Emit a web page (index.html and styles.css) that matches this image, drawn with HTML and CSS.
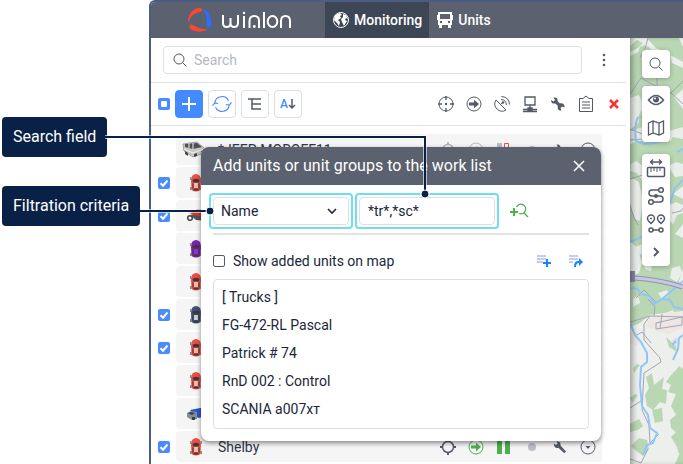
FILE: index.html
```html
<!DOCTYPE html>
<html lang="en">
<head>
<meta charset="utf-8">
<title>Wialon</title>
<link rel="stylesheet" href="styles.css">
</head>
<body>
<svg class="defs" aria-hidden="true">
  <symbol id="search" viewBox="0 0 16 16"><circle cx="7" cy="7" r="5"/><path d="M10.700 10.700L14.500 14.500"/></symbol>
  <symbol id="check" viewBox="0 0 12 12"><path d="M2.500 6.200L5 8.700 9.500 3.500"/></symbol>
  <symbol id="target" viewBox="0 0 18 18"><circle cx="9" cy="9" r="7"/><path stroke-width="1.400" d="M9 1v4M9 13v4M1 9h4M13 9h4"/><circle class="solid" cx="9" cy="9" r="1.200"/></symbol>
  <symbol id="crosshair" viewBox="0 0 18 18"><circle cx="9" cy="9" r="5.500" stroke-width="1.500"/><path stroke-width="2" d="M9 1v3M9 14v3M1 9h3M14 9h3"/></symbol>
  <symbol id="arrow" viewBox="0 0 18 18"><circle cx="9" cy="9" r="7"/><path class="solid" d="M4 7.500h5V4.800L14 9l-5 4.200v-2.700H4z"/></symbol>
  <symbol id="wrench" viewBox="0 0 18 18"><path class="solid" d="M3 5.500L5 7l1.700-1.500L5.500 3.500c3-.5 4.500 1.500 4 4l5.500 6-1.700 1.700-6-5.500C5 10.500 2.500 9 3 5.500z"/></symbol>
  <symbol id="wrench-wide" viewBox="0 0 18 18"><path class="solid" d="M2 5l2.500 1.500L6 5 4.500 2.500C8 2 9 4 8.500 6L11 8.500c2.500-1 5 .8 4.500 4L13 11.500 11.500 13l1 2.500C9.500 16 8 13.500 9 11L6.300 8.500C4 9 2 8 2 5z"/></symbol>
  <symbol id="down" viewBox="0 0 18 18"><circle cx="9" cy="9" r="7"/><path class="solid" d="M6.500 8h5L9 11z"/></symbol>
  <symbol id="car" viewBox="0 0 12 20"><path class="paint" d="M2 3Q6-1 10 3L11 8 10.500 17Q6 20 1.500 17L1 8z"/><path fill="#44383c" d="M2.500 7Q6 4.500 9.500 7L8.700 9.500H3.300zM2.500 10l1 1v4l-1 1zM9.500 10l-1 1v4l1 1zM3 16.500q3-2 6 0l-1 1H4z"/><path class="roof" d="M4 10h4v5H4z"/><path stroke="#333" stroke-width=".8" d="M.8 4v3M11.200 4v3M.8 14v3M11.200 14v3"/></symbol>
</svg>

<main class="app">
  <header class="topbar">
    <a class="brand" href="#" aria-label="Wialon">
      <svg class="mark" viewBox="0 0 26 26"><path fill="#fb4637" d="M1.500 16C0 9 5 1 13 1c2.800 0 2.800 3.400 0 4C7 6 3.500 9 1.500 16zM3.500 17.500c3-1 5 4.500 17 4.500-5 4-15.500 3.500-18-1.500Q2 18 3.500 17.500z"/><path fill="#2e6bff" d="M15.500 2c5 1 8.900 6 8.700 16 0 3.500-4.200 3.500-4.500 1C20 11 19 6 15.500 2z"/></svg>
      <svg class="word" viewBox="0 0 72 20"><path d="M2 5v8q0 4 3.700 4T9.500 13V8M9.500 13q0 4 3.700 4T17 13V5M23 6v12M28.500 18v-7q0-5 4.800-5t4.700 5v7M43 2v16M60 18v-7q0-5 4.500-5T69 11v7"/><ellipse cx="51.500" cy="11.500" rx="4.800" ry="5.500"/><circle class="dot" cx="23" cy="3" r="1.200"/><circle class="dot" cx="33.300" cy="16.500" r="1.400"/></svg>
    </a>
    <nav class="tabs">
      <a class="tab current" href="#"><svg class="ic" viewBox="0 0 18 18"><circle cx="9" cy="9" r="7.500"/><path class="solid" d="M3 4l5-2 2 2-2 1 1 2-3 2 2 2-1 4-2-3-3-3zM11 3l3 1 2 4-2-1-1 2 2 1-3 5-2-4-1-3 2-2z"/></svg>Monitoring</a>
      <a class="tab" href="#"><svg class="ic" viewBox="0 0 18 18"><path class="solid" fill-rule="evenodd" d="M2 1h14v3h1v5h-1v5h-1v3h-3v-3H6v3H3v-3H2V9H1V4h1zM4 3v5h10V3zM4 10v2h2v-2zM12 10v2h2v-2z"/></svg>Units</a>
    </nav>
  </header>
  <div class="workspace">
    <section class="panel">
      <div class="searchrow">
        <label class="searchbox"><svg class="ic16"><use href="#search"/></svg><input type="search" placeholder="Search" aria-label="Search"></label>
        <button class="plain more" aria-label="More"><svg viewBox="0 0 4 14"><circle cx="2" cy="2" r="1.300"/><circle cx="2" cy="7" r="1.300"/><circle cx="2" cy="12" r="1.300"/></svg></button>
      </div>
      <div class="toolbar">
        <label class="tick partial"><input type="checkbox" aria-label="Select all"><i></i></label>
        <button class="tool primary" aria-label="Add"><svg class="ic" viewBox="0 0 18 18"><path stroke-width="2" d="M9 2v14M2 9h14"/></svg></button>
        <button class="tool blue" aria-label="Refresh"><svg class="ic20" viewBox="0 0 18 18"><path d="M2.500 8A6.500 6.500 0 0 1 14.800 6M15.500 10A6.500 6.500 0 0 1 3.200 12M12.500 9.500l3 .5L17.500 7.500M.5 10.500L2.500 8 5.500 8.500"/></svg></button>
        <button class="tool" aria-label="Tree"><svg class="ic" viewBox="0 0 18 18"><path stroke-width="1.500" d="M2 4h13M6 4v10h9M6 9h9"/></svg></button>
        <button class="tool" aria-label="Sort"><span class="sort">A</span><svg class="sortarrow" viewBox="0 0 8 12"><path stroke-width="1.500" d="M4 1v9M1 7l3 3 3-3"/></svg></button>
        <div class="columns">
          <svg class="ic"><use href="#target"/></svg>
          <svg class="ic"><use href="#arrow"/></svg>
          <svg class="ic" viewBox="0 0 18 18"><path d="M3 5q-3 5 1 9t9 1zM7 10l3-3M8 4.500q5 0 5.500 5.500M8.500 1.500Q16 2 16.500 9.500"/><circle class="solid" cx="10" cy="7.500" r="1.300"/></svg>
          <svg class="ic" viewBox="0 0 18 18"><path stroke-width="1.300" d="M4 2h10v8H4zM9 10v4M2 14.500h14M2 16.500h14M7 13h4v3H7z"/></svg>
          <svg class="ic"><use href="#wrench-wide"/></svg>
          <svg class="ic" viewBox="0 0 18 18"><path d="M2.500 3.500H6L9 1l3 2.500h3.500v13h-13zM5 7h8M5 10h8M5 13h8"/></svg>
          <svg class="ic red" viewBox="0 0 18 18"><path stroke-width="2.500" d="M5 5l8 8M13 5l-8 8"/></svg>
        </div>
      </div>
      <ul class="units">
        <li><span></span><div class="unit"><svg class="side" viewBox="0 0 24 20"><path fill="#c9c8c4" stroke="#a5a29d" d="M1 4l14-2 7 6v5l-11 4-9-6z"/><path fill="#4e5052" stroke="none" d="M3 4l12-1 5 4-9 2-8-2z"/><path fill="#444" stroke="none" d="M3 11l3 2v3l-3-2zM12 14l3-1v3l-3 1zM19 11l2-1v3l-2 1z"/><path stroke="#f4f1e9" d="M7 3v5M11 3v6M2 9l9 4 11-4"/></svg><span class="name">*JEEP-MOROFF11</span><span class="state"><svg class="ic faint"><use href="#crosshair"/></svg><svg class="ic faint"><use href="#arrow"/></svg><svg class="ic" viewBox="0 0 18 18"><path fill="#b9bcc2" stroke="none" d="M2 2h5v14H2z"/><path stroke="#e94b55" d="M9.500 2.500h4v13h-4z"/></svg><svg class="ic" viewBox="0 0 18 18"><circle cx="9" cy="9" r="4" fill="#b9bdc5" stroke="none"/></svg><svg class="ic"><use href="#wrench"/></svg><svg class="ic"><use href="#down"/></svg></span></div></li>
        <li><label class="tick"><input type="checkbox" checked aria-label="Unit 2"><svg><use href="#check"/></svg></label><div class="unit"><svg class="car"><use href="#car"/></svg></div></li>
        <li><label class="tick"><input type="checkbox" checked aria-label="Unit 3"><svg><use href="#check"/></svg></label><div class="unit"><svg class="side low" viewBox="0 0 24 20"><circle cx="4" cy="12" r="2.300" stroke="#444" stroke-width="1.500"/><path fill="#555" stroke="none" d="M4 9l8-2 12 5-2 3-12-1z"/><path fill="#d5322c" stroke="none" d="M3 7l4-1 4-3h5l8 5v3l-12-1z"/></svg></div></li>
        <li><span></span><div class="unit"><svg class="car purple"><use href="#car"/></svg></div></li>
        <li><span></span><div class="unit"><svg class="car"><use href="#car"/></svg></div></li>
        <li><label class="tick"><input type="checkbox" checked aria-label="Unit 6"><svg><use href="#check"/></svg></label><div class="unit"><svg class="car navy"><use href="#car"/></svg></div></li>
        <li><label class="tick"><input type="checkbox" checked aria-label="Unit 7"><svg><use href="#check"/></svg></label><div class="unit"><svg class="car"><use href="#car"/></svg></div></li>
        <li><span></span><div class="unit"><svg class="car"><use href="#car"/></svg></div></li>
        <li><span></span><div class="unit"><svg class="side low" viewBox="0 0 24 20"><path fill="#2b54d4" stroke="none" d="M4 6l20-4v10l-12 2z"/><path fill="#858c92" stroke="none" d="M1 9l4-2 6 1v7l-5 1-5-3z"/><path fill="#39424c" stroke="none" d="M2 9l3-1 4 1-3 2zM6 13h3v3H6z"/></svg></div></li>
        <li><label class="tick"><input type="checkbox" checked aria-label="Shelby"><svg><use href="#check"/></svg></label><div class="unit"><svg class="car"><use href="#car"/></svg><span class="name">Shelby</span><span class="state"><svg class="ic"><use href="#crosshair"/></svg><svg class="ic green"><use href="#arrow"/></svg><svg class="ic green" viewBox="0 0 18 18"><path class="solid" d="M2 2h5v14H2zM10 2h5v14h-5z"/></svg><svg class="ic" viewBox="0 0 18 18"><circle cx="9" cy="9" r="4" fill="#b9bdc5" stroke="none"/></svg><svg class="ic"><use href="#wrench"/></svg><svg class="ic"><use href="#down"/></svg></span></div></li>
      </ul>
    </section>
    <section class="map" aria-label="Map">
      <svg class="terrain" viewBox="0 0 53 426" preserveAspectRatio="xMinYMin slice">
        <path fill="#ecefec" d="M0 0h53v426H0z"/>
        <path fill="#b9d7b3" d="M0 18l8-4 2-5 4-2 5 2 4 5 8-2 9 5 2 8 11 5v21l-9 8 9 12v77l-10 8 10 5v25l-8 10 8 4v30l-4 13 4 10v20l-18 2-16 2-9 8-10 4v-50l9-4 3-11-5-14-7-7v-34l5 12 5 2 3-20-4-19-9-5V92l9-8-3-15-6-10z"/>
        <path fill="#b9d7b3" d="M17 0h32l4 9v15l-9-5-8-4-10-5zM0 8l7-6 6 3-5 5-8 4z"/>
        <g fill="#eaeeea"><path d="M0 60l9-3 5 11-6 11-8-3zM0 93l13-4 8 5-4 7-17 5zM39 93l14-4v12l-10-2-3 5zM38 128l8-4 7 2v12l-8 1-3-5zM1 126l5-3 7 5-1 14-5-7-7-2zM40 167l6-3 7 3v8l-6 2-4 9-5-5zM5 209l8-3 2 8-8 4zM14 223l8 2-1 8-6-2zM42 230l8-2 2 7-5 9-7-4zM3 261l5-4 2 8-7 4zM28 255l9-3 2 5-7 5zM35 275l8-3 2 5-7 2z"/></g>
        <g fill="#b9d7b3"><path d="M16 339l6-4 2 12 10-8-2 12 5 1-1 14-6-2-7 8-6-4-2-11 4-7zM36 344l5-7 5-5 3-4 4 3v59l-5 6-7-6-1-8 6-5-5-9 5-12-8-2 3-7zM22 372l10-2 1 13-8 2zM0 386l9-5 4 7-5 4-8 2zM1 408l8-8 8 2 2 9-6 7-8-6zM41 399l7-7 5-2v23l-4 3-2-7zM36 299l10 9 1 6-8-5zM3 330l4-4 3 1-6 8zM0 360l5-4 3 1-6 8zM50 415l3-3v14h-8z"/></g>
        <path fill="#eee6e2" d="M21 278l26-4 6 3v13l-14 6-14-3-9-5zM0 290l5 3 5 10-4 5-6-3z"/>
        <path fill="#dadde3" d="M42 303l4-4 3 4-4 5z"/>
        <g class="road"><path d="M18 0l-3 11-5 8M0 56l11-16 29 16 13-13M40 54l13 12M27 39v14L11 80M0 141l13-4M0 91l10 4 11 4 7-4M0 102l14-1M0 167q4 14 8 20M42 175l9-2 2-3M0 284l20-6 33 1M20 278l-6 8v16l16 18 1 4-17 11-2 37 7 15 1 18 9-9M0 370l11-7M0 421l11 4 7-14M26 285l26-6v8l-26 4zM32 276l-2 15M5 298l7-4 9 11M6 260l8-8 12 12M18 261l7 8-1 9"/></g>
        <g class="river"><path d="M8 79q-4 8-2 24l8 3 11-1 9-3M53 111l-6 3M53 142l-8 8-5 15M0 204l12-5M0 250l8 1 3 5 9 2 4 8 8-5 8 1 4 7 9 2M32 261l12-10 9-8M0 285l5 12 6 7 6 11v9l-6 5-1 18 2 21 6 9 2 13 7 5-4 10-6 2-4 10M53 297l-4 3-1 11-5 11M42 307l4-4"/></g>
        <path stroke="#9292b8" stroke-width="5" d="M4 240q23 1 49 9"/><path stroke="#c7c7de" stroke-width="3" d="M4 240q23 1 49 9"/>
        <path fill="#8888ad" d="M0 233h5v11H0z"/>
      </svg>
      <div class="maptools">
        <div class="group"><button class="plain" aria-label="Find"><svg class="ic16"><use href="#search"/></svg></button></div>
        <div class="group second">
          <button class="plain" aria-label="Visibility"><svg class="ic" viewBox="0 0 18 18"><path stroke-width="1.500" d="M1.500 9Q9 0 16.500 9 9 18 1.500 9z"/><circle class="solid" cx="9" cy="8.500" r="3"/><circle cx="8" cy="7.500" r="1" fill="#fff" stroke="none"/></svg></button>
          <button class="plain" aria-label="Layers"><svg class="ic" viewBox="0 0 18 18"><path stroke-width="1.300" d="M1.500 4L6 2l6 2 4.500-2v12L12 16l-6-2-4.500 2zM6 2v12M12 4v12"/></svg></button>
        </div>
        <div class="group third">
          <button class="plain" aria-label="Measure"><svg class="ic20" viewBox="0 0 20 20"><path stroke-width="1.400" d="M5 4h10M7 1.500L4.500 4 7 6.500M13 1.500L15.500 4 13 6.500"/><rect x="1.500" y="9.500" width="17" height="9" rx="1" stroke-width="1.500"/><path d="M5 10v4M8 10v3M11 10v4M14 10v3"/></svg></button>
          <button class="plain" aria-label="Routes"><svg class="ic20" viewBox="0 0 20 20"><g stroke-width="1.500"><circle cx="15" cy="4" r="2.300"/><circle cx="5" cy="16" r="2.300"/><path d="M12.500 4H6q-3 0-3 3t3 3h8q3 0 3 3t-3 3H7.500"/></g><circle class="solid" cx="10" cy="10" r="2"/></svg></button>
          <button class="plain" aria-label="Track points"><svg class="ic20" viewBox="0 0 20 20"><g stroke-width="1.500"><path d="M5 9.500Q1.500 6.500 1.500 4.500a3.500 3.500 0 0 1 7 0Q8.500 6.500 5 9.500zM15 9.500q-3.500-3-3.500-5a3.500 3.500 0 0 1 7 0q0 2-3.500 5zM7 16h6"/><circle cx="5" cy="16" r="2"/><circle cx="15" cy="16" r="2"/></g><circle class="solid" cx="5" cy="4.500" r="1"/><circle class="solid" cx="15" cy="4.500" r="1"/></svg></button>
          <button class="plain" aria-label="Expand"><svg class="ic" viewBox="0 0 18 18"><path stroke-width="2" d="M7 5l4 4-4 4"/></svg></button>
        </div>
      </div>
    </section>
  </div>
</main>

<section class="dialog" role="dialog" aria-labelledby="dlg-title">
  <header class="dlg-head"><h2 id="dlg-title">Add units or unit groups to the work list</h2><button class="plain" aria-label="Close"><svg viewBox="0 0 12 12"><path stroke-width="1.500" d="M1 1l10 10M11 1L1 11"/></svg></button></header>
  <div class="filters">
    <div class="glow"><select aria-label="Filtration criteria"><option>Name</option></select><svg class="chev" viewBox="0 0 12 8"><path stroke-width="1.600" d="M2 2l4 4 4-4"/></svg></div>
    <div class="glow"><input type="text" value="*tr*,*sc*" aria-label="Search field"></div>
    <button class="plain green" aria-label="Find units"><svg class="findadd" viewBox="0 0 20 16"><path stroke-width="2" d="M1 9h8M5 5v8"/><path stroke-width="1.300" d="M7.500 4a4.800 4.800 0 1 1 2.500 6.500M15 10l4 4"/></svg></button>
  </div>
  <div class="options">
    <label class="mapcheck"><input type="checkbox">Show added units on map</label>
    <button class="plain bright" aria-label="Add to list"><svg class="lines" viewBox="0 0 16 14"><path class="pale" d="M1 2h9M1 5h9M1 8h6"/><path stroke-width="2" d="M11 5v8M7 9h8"/></svg></button>
    <button class="plain bright" aria-label="Replace list"><svg class="lines" viewBox="0 0 16 14"><path class="pale" d="M1 2h9M1 5h9M1 8h4"/><path class="solid" d="M6 13q0-7 5-6V4l4 4-4 4V9Q8 9 8 13z"/></svg></button>
  </div>
  <ul class="results">
    <li>[ Trucks ]</li><li>FG-472-RL Pascal</li><li>Patrick # 74</li><li>RnD 002 : Control</li><li>SCANIA a007xт</li>
  </ul>
</section>

<div class="callout field">Search field</div>
<div class="callout criteria">Filtration criteria</div>
<svg class="leaders" viewBox="0 0 430 230" aria-hidden="true"><path class="halo" d="M105 137H425V194M140 211H210"/><path d="M105 137H425V194M140 211H210"/><circle cx="425" cy="194" r="4"/><circle cx="210" cy="211" r="4"/></svg>
</body>
</html>
```

FILE: styles.css
```css
* { box-sizing: border-box; }
body { margin: 0; height: 100vh; overflow: hidden; position: relative; background: #fff; color: #20263a; font: 14px/20px Roboto, sans-serif; }
ul, h2 { margin: 0; padding: 0; list-style: none; font-weight: 400; }
a { color: inherit; text-decoration: none; }
input, select, button { font: inherit; color: inherit; margin: 0; }
svg { display: block; flex: none; fill: none; stroke: currentColor; }
.defs { position: absolute; width: 0; height: 0; }
.solid { fill: currentColor; stroke: none; }
.ic { width: 18px; height: 18px; }
.ic16 { width: 16px; height: 16px; }
.ic20 { width: 20px; height: 20px; }
.plain { border: 0; padding: 0; background: none; display: grid; place-items: center; }
.green { color: #4caf50; }
.red { color: #f4382d; }
.faint { opacity: 0.4; }

.app { height: 100%; margin-left: 149px; display: flex; flex-direction: column; border: solid #4b5d83; border-width: 2px 0 0 2px; border-radius: 6px 0 0 0; overflow: hidden; }
.topbar { height: 36px; flex: none; display: flex; background: #5b616e; color: #fff; }
.brand { width: 174px; padding-left: 36px; display: flex; align-items: center; gap: 8px; }
.mark { width: 26px; height: 26px; stroke: none; }
.word { width: 72px; height: 20px; stroke-width: 2; }
.dot { fill: #fff; stroke: none; }
.tabs { display: flex; }
.tab { display: flex; align-items: center; gap: 4px; padding: 0 7px; font-weight: 500; }
.current { background: #3d4655; }
.workspace { flex: 1; min-height: 0; display: flex; }
.panel { width: 479px; flex: none; color: #535967; overflow: hidden; }
.searchrow { display: flex; align-items: center; gap: 20px; height: 45px; margin-right: 4px; padding-left: 12px; border-bottom: 1px solid #e1e2e4; }
.searchbox { width: 419px; height: 28px; display: flex; align-items: center; gap: 6px; padding: 0 8px; border: 1px solid #dddfe2; border-radius: 4px; }
.searchbox input { flex: 1; min-width: 0; border: 0; padding: 0; outline: 0; background: none; }
.searchbox input::placeholder { color: #b5b8be; opacity: 1; }
.more svg { width: 4px; height: 14px; fill: currentColor; stroke: none; }
.toolbar { height: 43px; margin-right: 4px; padding-left: 7px; display: flex; align-items: center; gap: 5px; border-bottom: 1px solid #e1e2e4; }
.tick { position: relative; width: 12px; height: 12px; display: grid; place-items: center; background: #4a8cff; border-radius: 2px; color: #fff; }
.tick input { position: absolute; width: 12px; height: 12px; opacity: 0; }
.tick svg { width: 12px; height: 12px; stroke-width: 2; }
.partial i { width: 6px; height: 6px; background: #fff; border-radius: 1px; }
.tool { width: 28px; height: 28px; padding: 0; display: flex; align-items: center; justify-content: center; border: 1px solid #dcdee2; border-radius: 4px; background: #fff; }
.primary { background: #438aff; border-color: #438aff; color: #fff; }
.blue { color: #438aff; }
.sort { color: #438aff; font-size: 12px; font-weight: 500; }
.sortarrow { width: 8px; height: 12px; }
.columns { margin-left: auto; padding-right: 3px; display: flex; gap: 10px; }

.units { padding: 8px 28px 0 7px; display: grid; gap: 2px; }
.units li { display: grid; grid-template-columns: 12px 1fr; gap: 6px; align-items: center; }
.unit { height: 31px; display: flex; align-items: center; padding: 0 5px 0 14px; background: #f5f5f6; border-radius: 4px; }
.name { margin-left: 16px; color: #30364a; }
.side { width: 24px; height: 20px; margin-left: -8px; }
.side + .name { margin-left: 12px; }
.low { margin-left: -4px; }
.state { margin-left: auto; display: flex; gap: 10px; }
.car { --paint: #ef4e42; --roof: #f2b9ab; width: 12px; height: 20px; stroke: none; }
.purple { --paint: #7b22b8; --roof: #8f33c9; }
.navy { --paint: #3d5274; --roof: #c5cdd5; }
.paint { fill: var(--paint); }
.roof { fill: var(--roof); }

.map { flex: 1; position: relative; overflow: hidden; color: #535967; box-shadow: inset 5px 0 6px -3px #0006; }
.terrain { position: absolute; inset: 0; width: 100%; height: 100%; z-index: -1; stroke: none; }
.road { stroke: #a2a5b8; stroke-width: 1; }
.river { stroke: #91c5fa; stroke-width: 2; }
.maptools { padding: 12px; }
.group { width: 28px; background: #fff; border-radius: 4px; box-shadow: 0 1px 5px #0004; }
.group button { width: 28px; height: 28px; }
.second { margin-top: 8px; }
.third { margin-top: 12px; }

.dialog { position: absolute; left: 201px; top: 147px; width: 400px; background: #fff; border-radius: 8px; box-shadow: 0 2px 5px #0007; overflow: hidden; }
.dlg-head { height: 38px; padding: 0 16px 0 12px; display: flex; align-items: center; justify-content: space-between; background: #5b616e; color: #fff; }
.dlg-head h2 { font-size: 16px; }
.dlg-head svg { width: 12px; height: 12px; }
.filters { margin: 0 12px; padding: 8px 0 4px; display: flex; align-items: center; gap: 2px; border-bottom: 2px solid #e1e2e3; }
.glow { position: relative; width: 144px; height: 36px; padding: 2px; border: 2px solid #6fdff0; border-radius: 4px; flex: none; }
.glow:first-child { margin-left: -4px; }
.glow select, .glow input { appearance: none; width: 100%; height: 28px; padding: 0 8px; border: 1px solid #dddfe2; border-radius: 4px; background: #fff; outline: 0; }
.glow select { padding: 0 7px; }
.chev { position: absolute; right: 13px; top: 12px; width: 12px; height: 8px; pointer-events: none; }
.filters button { margin-left: 8px; }
.findadd { width: 20px; height: 16px; }
.options { height: 44px; padding: 8px 17px 0 12px; display: flex; align-items: center; gap: 16px; }
.mapcheck { flex: 1; display: flex; align-items: center; gap: 8px; }
.mapcheck input { appearance: none; width: 12px; height: 12px; border: 1px solid #535967; border-radius: 2px; }
.bright { color: #1686ff; }
.lines { width: 16px; height: 14px; }
.pale { stroke: #829bec; }
.results { margin: 0 12px 12px; padding: 3px 8px 5px; border: 1px solid #dddfe2; border-radius: 4px; }
.results li { line-height: 28px; }

.callout { position: absolute; left: 2px; height: 40px; padding: 0 11px; font-size: 16px; line-height: 40px; background: #0a2147; color: #fff; border-radius: 4px; }
.field { top: 117px; }
.criteria { top: 186px; }
.leaders { position: absolute; left: 0; top: 0; width: 430px; height: 230px; stroke: #0a2147; stroke-width: 2; pointer-events: none; }
.leaders circle { fill: #0a2147; stroke: #fff; stroke-width: 1; }
.leaders .halo { stroke: #fff9; stroke-width: 4; }
```
